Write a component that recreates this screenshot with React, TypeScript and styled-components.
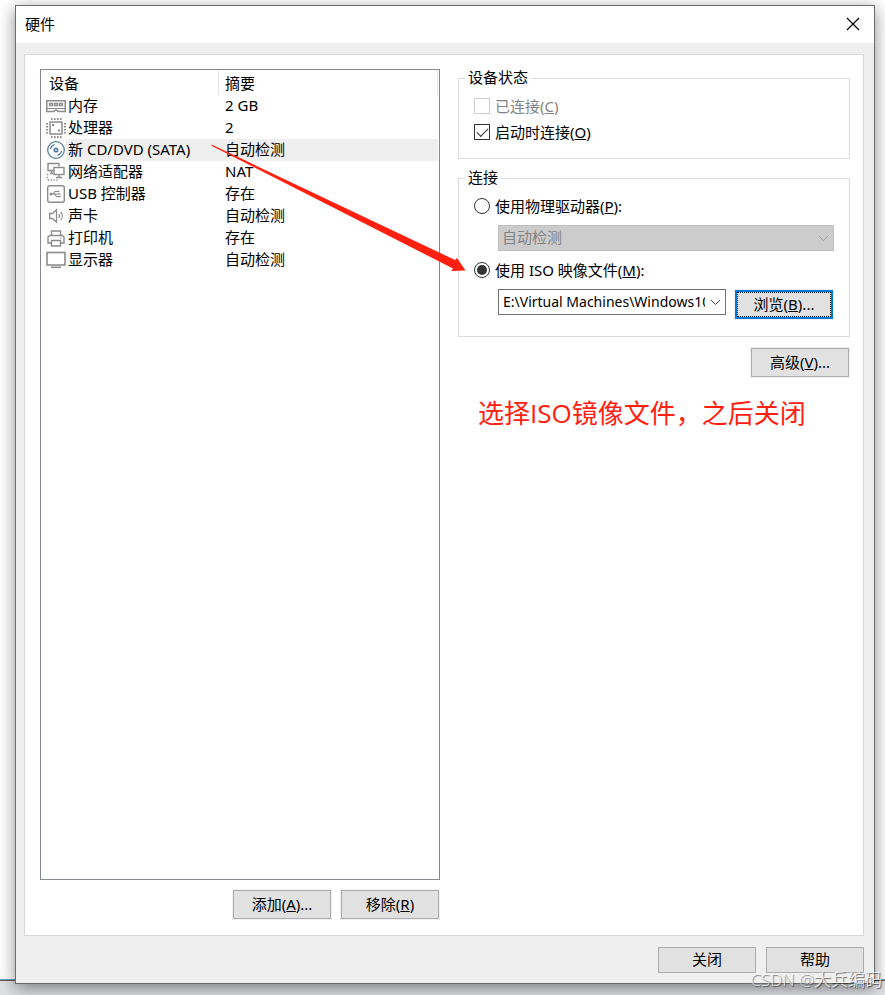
import React, { useState } from "react";
import styled, { createGlobalStyle, css } from "styled-components";

const GlobalStyle = createGlobalStyle`
  *, *::before, *::after { box-sizing: border-box; }
  body {
    margin: 0;
    font-family: "Noto Sans", "Noto Sans CJK SC", sans-serif;
    font-size: 15px;
    font-weight: 400;
    line-height: 22px;
    color: #000;
  }
  button, input, select { font: inherit; color: inherit; }
`;

const Desktop = styled.div`
  position: relative;
  display: flex;
  min-height: 100vh;
  padding: 5px 10px 11px 15px;
  overflow: hidden;
  background: linear-gradient(
    to top,
    #dfe0e4 14px,
    #5b5f63 14px,
    #5b5f63 15px,
    #6fa3bb 15px,
    #6fa3bb 16px,
    #fff 16px
  );
`;

const Dialog = styled.section`
  position: relative;
  display: flex;
  flex-direction: column;
  flex: 1;
  min-width: 0;
  border: 1px solid #6b6b6b;
  background: #efefef;
  box-shadow: 0 4px 16px rgba(0, 0, 0, 0.45);
`;

const TitleBar = styled.header`
  display: flex;
  align-items: center;
  justify-content: space-between;
  height: 37px;
  padding: 0 12px 0 9px;
  background: #fff;
`;

const Title = styled.h1`
  margin: 0;
  padding-bottom: 2px;
  font-size: 15px;
  font-weight: inherit;
`;

const CloseButton = styled.button`
  display: flex;
  width: 18px;
  height: 18px;
  padding: 1px 2px;
  border: 0;
  background: none;
`;

const Panel = styled.div`
  display: grid;
  grid-template-columns: 400fr 392fr;
  column-gap: 18px;
  flex: 1;
  margin: 11px 10px 0 8px;
  padding: 14px 13px 15px 15px;
  border: 1px solid #d9d9d9;
  background: #fff;
`;

const DeviceColumn = styled.div`
  display: flex;
  flex-direction: column;
  gap: 9px;
  min-width: 0;
`;

const DeviceList = styled.div`
  flex: 1;
  padding-right: 1px;
  border: 1px solid #828790;
`;

const DeviceTable = styled.table`
  width: 100%;
  table-layout: fixed;
  border-collapse: separate;
  border-spacing: 0;
  text-align: left;
`;

const IconCol = styled.col`
  width: 25px;
`;

const NameCol = styled.col`
  width: 153px;
`;

const HeadCell = styled.th<{ $inset: number }>`
  height: 25px;
  padding: 0 0 0 ${(p) => p.$inset}px;
  border-right: 1px solid #e5e5e5;
  font-weight: inherit;
`;

const IconCell = styled.td`
  height: 22px;
  padding: 1px 0 1px 5px;

  svg { display: block; }
`;

const Cell = styled.td<{ $inset: number; $active?: boolean }>`
  height: 22px;
  padding: 0 0 2px ${(p) => p.$inset}px;
  line-height: 20px;
  white-space: nowrap;
  background: ${(p) => (p.$active ? "#efefef" : "transparent")};
`;

const ButtonRow = styled.div`
  display: flex;
  justify-content: flex-end;
  gap: 8px;
`;

const PushButton = styled.button<{ $focused?: boolean }>`
  flex: none;
  width: 98px;
  height: 29px;
  margin: 1px;
  padding: 0 0 2px;
  border: 1px solid #adadad;
  background: #e1e1e1;
  box-shadow: 0 0 0 1px #f0f0f0;
  white-space: nowrap;

  ${(p) =>
    p.$focused &&
    css`
      border: 2px solid #0078d7;
      outline: 1px dotted #000;
      outline-offset: -3px;
    `}
`;

const FooterButton = styled(PushButton)`
  height: 26px;
  margin: 0;
`;

const Settings = styled.div`
  display: flex;
  flex-direction: column;
  gap: 10px;
  min-width: 0;
`;

const Group = styled.fieldset<{ $bottom: number }>`
  display: block;
  min-width: 0;
  margin: 0;
  padding: 6px 15px ${(p) => p.$bottom}px;
  border: 1px solid #dcdcdc;
`;

const Legend = styled.legend`
  margin-left: -9px;
  padding: 0 3px 2px;
  line-height: 16px;
`;

const Option = styled.label<{ $disabled?: boolean }>`
  display: flex;
  align-items: center;
  gap: 5px;
  height: 26px;
  color: ${(p) => (p.$disabled ? "#838383" : "#000")};
`;

const CheckBox = styled.input`
  display: grid;
  place-content: center;
  flex: none;
  appearance: none;
  width: 16px;
  height: 16px;
  margin: 0;
  border: 1px solid #333;
  background: #fff;

  &:disabled { border-color: #ccc; }

  &:checked::before {
    content: "";
    width: 11px;
    height: 6px;
    margin-top: -3px;
    border: solid #333;
    border-width: 0 0 1px 1px;
    transform: rotate(-45deg);
  }
`;

const Radio = styled.input`
  display: grid;
  place-content: center;
  flex: none;
  appearance: none;
  width: 16px;
  height: 16px;
  margin: 0;
  border: 1px solid #333;
  border-radius: 50%;
  background: #fff;

  &:checked::before {
    content: "";
    width: 10px;
    height: 10px;
    border-radius: 50%;
    background: #333;
  }
`;

const DriveField = styled.div`
  display: grid;
  align-items: center;
  margin: 6px 0 6px 24px;

  > * { grid-area: 1 / 1; }
  > svg { justify-self: end; margin-right: 5px; pointer-events: none; }
`;

const DriveSelect = styled.select`
  appearance: none;
  width: 100%;
  height: 26px;
  padding: 0 24px 2px 3px;
  border: 1px solid #bfbfbf;
  border-radius: 0;
  background: #ccc;
  color: #838383;
  opacity: 1;
`;

const FileRow = styled.div`
  display: flex;
  align-items: flex-start;
  gap: 8px;
  margin: 6px 0 0 24px;
`;

const FileCombo = styled.div`
  display: flex;
  flex: 1;
  min-width: 0;
  height: 26px;
  border: 1px solid #707070;
  background: #fff;
`;

const FileInput = styled.input`
  flex: 1;
  min-width: 0;
  padding: 0;
  margin-left: 4px;
  border: 0;
  outline: 0;
  background: none;
  font-size: 14px;
`;

const ComboArrow = styled.button`
  display: flex;
  align-items: center;
  justify-content: center;
  width: 20px;
  padding: 0;
  border: 0;
  background: none;
`;

const Note = styled.p`
  margin: 5px 0 0 20px;
  font-family: "Open Sans", "Noto Sans CJK SC", sans-serif;
  font-size: 26px;
  line-height: 40px;
  color: #ff2010;
  white-space: nowrap;
`;

const Footer = styled.footer`
  display: flex;
  justify-content: flex-end;
  gap: 10px;
  padding: 11px 10px 10px;
`;

const ArrowMark = styled.svg`
  position: absolute;
  top: 136px;
  left: 194px;
  pointer-events: none;
`;

const Watermark = styled.span`
  position: absolute;
  right: 3px;
  bottom: 4px;
  font-family: "Open Sans", "Noto Sans CJK SC", sans-serif;
  font-size: 17px;
  font-weight: 350;
  color: rgba(255, 255, 255, 0.75);
  text-shadow: 1px 1px 1px rgba(0, 0, 0, 0.55);
  white-space: nowrap;
  pointer-events: none;
`;

const GRAY = "#8c8c8c";

function Chevron({ color }: { color: string }) {
  return (
    <svg width="11" height="7" viewBox="0 0 11 7" fill="none" stroke={color} aria-hidden="true">
      <path d="M1 1 5.500 5.500 10 1" />
    </svg>
  );
}

function Icon({ children, color = GRAY }: { children: React.ReactNode; color?: string }) {
  return (
    <svg width="20" height="20" viewBox="0 0 20 20" fill="none" stroke={color} aria-hidden="true">
      {children}
    </svg>
  );
}

const MemoryIcon = () => (
  <Icon>
    <path d="M.75 4.700h18.500v10.800h-7.200l-1.300-1.200H9.200l-1.300 1.200H.75z" strokeWidth="1.500" />
    <path d="M1 12.500h18" />
    <path d="M3.500 7.500h3v2h-3zM8.500 7.500h3v2h-3zM13.500 7.500h3v2h-3z" strokeWidth="1.300" />
  </Icon>
);

const CpuIcon = () => (
  <Icon>
    <rect x="4" y="4" width="12" height="12" strokeWidth="1.500" />
    <path d="M5 1h11M5 19h11" strokeWidth="2" strokeDasharray="1.500 1.500" />
    <path d="M1 5v11M19 5v11" strokeWidth="2" strokeDasharray="1.500 1.500" />
    <path d="M6 7h2M12 12.500h2" strokeWidth="2" />
  </Icon>
);

const DiscIcon = () => (
  <Icon color="#557da0">
    <circle cx="10" cy="10" r="8.300" strokeWidth="1.300" />
    <circle cx="10" cy="10" r="1.700" strokeWidth="1.700" />
    <path d="M4.500 9a5.500 5.500 0 0 1 4-4.300M15.500 11a5.500 5.500 0 0 1-4 4.300" strokeWidth="1.300" />
  </Icon>
);

const NetworkIcon = () => (
  <Icon>
    <path d="M8 8.500H2v-7h11v3" strokeWidth="1.400" />
    <path d="M4 11.500h3M5.500 9v2" strokeWidth="1.400" />
    <rect x="8" y="5.500" width="10" height="7" strokeWidth="1.400" />
    <path d="M13 12.500v2.500M10 15.500h6" strokeWidth="1.400" />
    <path d="M1.500 12v6M2 18h11" strokeWidth="1.400" strokeDasharray="1.200 1.600" />
  </Icon>
);

const UsbIcon = () => (
  <Icon>
    <rect x="1.700" y="1.700" width="16.600" height="16.600" rx="2" strokeWidth="1.400" />
    <path d="M5 10h10M7 10l2-2.500h3M8.500 10l2 2.500H13" strokeWidth="1.100" />
    <circle cx="5" cy="10" r="1.500" fill={GRAY} stroke="none" />
    <path d="M11.500 6.700h2v1.600h-2zM12.500 11.700h2v1.600h-2z" fill={GRAY} stroke="none" />
  </Icon>
);

const SpeakerIcon = () => (
  <Icon>
    <path d="M3.700 7.500h2.800l4-3.700v12.400l-4-3.700H3.700z" strokeWidth="1.300" />
    <path d="M12.700 8a3 3 0 0 1 0 4M14.700 6a6 6 0 0 1 0 8" strokeWidth="1.200" />
  </Icon>
);

const PrinterIcon = () => (
  <Icon>
    <path d="M5.500 7.500V3h9v4.500" strokeWidth="1.400" />
    <path d="M5 15H2V9l1.500-1.500h13L18 9v6h-3" strokeWidth="1.400" />
    <path d="M5.500 12.500h9V18h-9z" strokeWidth="1.400" />
    <path d="M14 10h1.500" />
  </Icon>
);

const MonitorIcon = () => (
  <Icon>
    <rect x="1" y="2.500" width="18" height="12.500" strokeWidth="1.600" />
    <path d="M5 17.300h10" strokeWidth="1.600" />
  </Icon>
);

const devices = [
  { name: "内存", summary: "2 GB", Glyph: MemoryIcon },
  { name: "处理器", summary: "2", Glyph: CpuIcon },
  { name: "新 CD/DVD (SATA)", summary: "自动检测", Glyph: DiscIcon },
  { name: "网络适配器", summary: "NAT", Glyph: NetworkIcon },
  { name: "USB 控制器", summary: "存在", Glyph: UsbIcon },
  { name: "声卡", summary: "自动检测", Glyph: SpeakerIcon },
  { name: "打印机", summary: "存在", Glyph: PrinterIcon },
  { name: "显示器", summary: "自动检测", Glyph: MonitorIcon },
];

export default function App() {
  const [selected, setSelected] = useState(2);
  const [source, setSource] = useState("iso");
  const [autoConnect, setAutoConnect] = useState(true);
  const [isoPath, setIsoPath] = useState("E:\\Virtual Machines\\Windows10");

  return (
    <>
      <GlobalStyle />
      <Desktop>
        <Dialog role="dialog" aria-labelledby="dialog-title">
          <TitleBar>
            <Title id="dialog-title">硬件</Title>
            <CloseButton type="button" aria-label="关闭窗口">
              <svg width="14" height="14" viewBox="0 0 14 14" stroke="#000" strokeWidth="1.200" aria-hidden="true">
                <path d="m1 1 12 12M13 1 1 13" />
              </svg>
            </CloseButton>
          </TitleBar>

          <Panel>
            <DeviceColumn>
              <DeviceList>
                <DeviceTable>
                  <colgroup>
                    <IconCol />
                    <NameCol />
                    <col />
                  </colgroup>
                  <thead>
                    <tr>
                      <HeadCell $inset={8} colSpan={2}>设备</HeadCell>
                      <HeadCell $inset={6}>摘要</HeadCell>
                    </tr>
                  </thead>
                  <tbody>
                    {devices.map(({ name, summary, Glyph }, i) => (
                      <tr key={name} onClick={() => setSelected(i)}>
                        <IconCell><Glyph /></IconCell>
                        <Cell $inset={2} $active={i === selected}>{name}</Cell>
                        <Cell $inset={6} $active={i === selected}>{summary}</Cell>
                      </tr>
                    ))}
                  </tbody>
                </DeviceTable>
              </DeviceList>
              <ButtonRow>
                <PushButton type="button">添加(<u>A</u>)...</PushButton>
                <PushButton type="button">移除(<u>R</u>)</PushButton>
              </ButtonRow>
            </DeviceColumn>

            <Settings>
              <Group $bottom={13}>
                <Legend>设备状态</Legend>
                <Option $disabled>
                  <CheckBox type="checkbox" disabled />
                  <span>已连接(<u>C</u>)</span>
                </Option>
                <Option>
                  <CheckBox
                    type="checkbox"
                    checked={autoConnect}
                    onChange={(e) => setAutoConnect(e.target.checked)}
                  />
                  <span>启动时连接(<u>O</u>)</span>
                </Option>
              </Group>

              <Group $bottom={16}>
                <Legend>连接</Legend>
                <Option>
                  <Radio
                    type="radio"
                    name="source"
                    checked={source === "drive"}
                    onChange={() => setSource("drive")}
                  />
                  <span>使用物理驱动器(<u>P</u>):</span>
                </Option>
                <DriveField>
                  <DriveSelect disabled={source !== "drive"} aria-label="物理驱动器">
                    <option>自动检测</option>
                  </DriveSelect>
                  <Chevron color="#a0a0a0" />
                </DriveField>
                <Option>
                  <Radio
                    type="radio"
                    name="source"
                    checked={source === "iso"}
                    onChange={() => setSource("iso")}
                  />
                  <span>使用 ISO 映像文件(<u>M</u>):</span>
                </Option>
                <FileRow>
                  <FileCombo>
                    <FileInput
                      type="text"
                      aria-label="ISO 映像文件"
                      value={isoPath}
                      onChange={(e) => setIsoPath(e.target.value)}
                    />
                    <ComboArrow type="button" aria-label="最近的文件">
                      <Chevron color="#444" />
                    </ComboArrow>
                  </FileCombo>
                  <PushButton type="button" $focused>浏览(<u>B</u>)...</PushButton>
                </FileRow>
              </Group>

              <ButtonRow>
                <PushButton type="button">高级(<u>V</u>)...</PushButton>
              </ButtonRow>

              <Note>选择ISO镜像文件，之后关闭</Note>
            </Settings>
          </Panel>

          <Footer>
            <FooterButton type="button">关闭</FooterButton>
            <FooterButton type="button">帮助</FooterButton>
          </Footer>

          <ArrowMark width="260" height="140" viewBox="210 142 260 140" fill="#ff2010" aria-hidden="true">
            <path d="M211.500 144.500 455 260 457 258 465.500 270.500 451 271 453 268.500 212 146z" />
          </ArrowMark>
        </Dialog>
        <Watermark>CSDN @大兵编码</Watermark>
      </Desktop>
    </>
  );
}
